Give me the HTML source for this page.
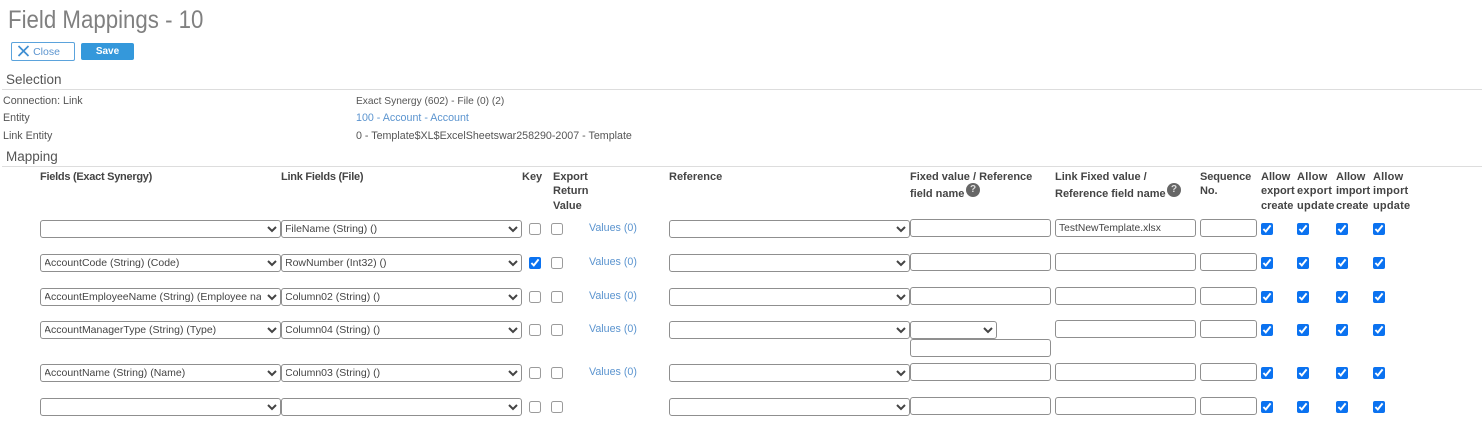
<!DOCTYPE html>
<html lang="en">
<head>
<meta charset="utf-8">
<title>Field Mappings - 10</title>
<style>
html,body{margin:0;padding:0;background:#fff;}
body{position:relative;width:1482px;height:425px;overflow:hidden;font-family:"Liberation Sans",sans-serif;font-size:10.7px;color:#555;filter:blur(.3px);}
.a{position:absolute;white-space:nowrap;}
h1{position:absolute;left:8px;top:5px;margin:0;font-size:25px;line-height:30px;font-weight:normal;color:#808080;white-space:nowrap;transform-origin:0 0;transform:scaleX(.89);}
h2{position:absolute;left:6px;margin:0;font-size:13.5px;line-height:16px;font-weight:normal;color:#555;}
.hr{position:absolute;left:2px;width:1480px;height:1px;background:#ddd;}
.btn{position:absolute;box-sizing:border-box;border-radius:2px;text-align:center;}
.th{position:absolute;font-weight:bold;font-size:11px;line-height:14.5px;color:#444;white-space:nowrap;}
a{color:#5b94cf;text-decoration:none;position:absolute;font-size:10.7px;line-height:14px;white-space:nowrap;}
select,input[type=text]{position:absolute;box-sizing:border-box;margin:0;font-family:"Liberation Sans",sans-serif;font-size:10.5px;color:#444;background:#fff;border:1px solid #8f8f8f;border-radius:3px;height:18px;}
select{padding:0;text-indent:-1px;}
input[type=text]{padding:0 3px;height:18px;font-size:10.3px;}
input[type=checkbox]{position:absolute;margin:0;width:12px;height:12px;accent-color:#0b72f0;}
input[type=checkbox]:not(:checked){opacity:.72;}
.c{left:40px;width:241px;padding-right:3px}.l{left:281px;width:241px}.r{left:669px;width:241px}
.f{left:910px;width:141px}.g{left:1055px;width:141px}.s{left:1200px;width:57px}
.k1{left:529px}.k2{left:551px}.p{left:1261px}.q{left:1297px}.m{left:1336px}.n{left:1373px}
.v{left:589px}
.help{position:absolute;top:183px;width:14px;height:14px;border-radius:50%;background:#666;color:#ddd;font-size:10px;font-weight:bold;line-height:14px;text-align:center;}
</style>
</head>
<body>
<h1>Field Mappings - 10</h1>
<div class="btn" style="left:11px;top:42px;width:64px;height:19px;border:1px solid #5ba3dc;color:#5b94cf;font-size:10.5px;line-height:19px;padding-left:7px;background:#fff;">Close</div>
<svg class="a" style="left:17px;top:45px" width="13" height="12" viewBox="0 0 13 12"><path d="M1.5 1 L11.5 11 M11.5 1 L1.5 11" stroke="#3f8fd2" stroke-width="1.7" fill="none"/></svg>
<div class="btn" style="left:81px;top:43px;width:53px;height:17px;background:#3498db;color:#fff;font-weight:bold;font-size:10px;line-height:18px;">Save</div>

<h2 style="top:72px">Selection</h2>
<div class="hr" style="top:89px"></div>
<div class="a" style="left:3px;top:94px;line-height:14px">Connection: Link</div>
<div class="a" style="left:356px;top:95px;line-height:14px;font-size:10.2px">Exact Synergy (602) - File (0) (2)</div>
<div class="a" style="left:3px;top:111px;line-height:14px">Entity</div>
<a style="left:356px;top:111px">100 - Account - Account</a>
<div class="a" style="left:3px;top:129px;line-height:14px">Link Entity</div>
<div class="a" style="left:356px;top:129px;line-height:14px">0 - Template$XL$ExcelSheetswar258290-2007 - Template</div>
<h2 style="top:149px">Mapping</h2>
<div class="hr" style="top:166px"></div>

<div class="th" style="left:40px;top:169.5px;letter-spacing:-.27px">Fields (Exact Synergy)</div>
<div class="th" style="left:281px;top:169.5px;letter-spacing:-.25px">Link Fields (File)</div>
<div class="th" style="left:522px;top:169.5px">Key</div>
<div class="th" style="left:553px;top:169.5px">Export<br>Return<br>Value</div>
<div class="th" style="left:669px;top:169.5px">Reference</div>
<div class="th" style="left:910px;top:169px;line-height:17px">Fixed value / Reference<br>field name</div>
<div class="help" style="left:966px">?</div>
<div class="th" style="left:1055px;top:169px;line-height:17px">Link Fixed value /<br>Reference field name</div>
<div class="help" style="left:1167px">?</div>
<div class="th" style="left:1200px;top:169.5px;letter-spacing:-.1px">Sequence<br>No.</div>
<div class="th" style="left:1261px;top:169.5px">Allow<br>export<br>create</div>
<div class="th" style="left:1297px;top:169.5px;letter-spacing:.25px">Allow<br>export<br>update</div>
<div class="th" style="left:1336px;top:169.5px">Allow<br>import<br>create</div>
<div class="th" style="left:1373px;top:169.5px;letter-spacing:.2px">Allow<br>import<br>update</div>

<!-- Row 1 -->
<select class="c" style="top:220px"><option></option></select>
<select class="l" style="top:220px"><option>FileName (String) ()</option></select>
<input type="checkbox" class="k1" style="top:223px"><input type="checkbox" class="k2" style="top:223px">
<a class="v" style="top:221px">Values (0)</a>
<select class="r" style="top:220px"><option></option></select>
<input type="text" class="f" style="top:219px">
<input type="text" class="g" style="top:219px" value="TestNewTemplate.xlsx">
<input type="text" class="s" style="top:219px">
<input type="checkbox" class="p" style="top:223px" checked><input type="checkbox" class="q" style="top:223px" checked><input type="checkbox" class="m" style="top:223px" checked><input type="checkbox" class="n" style="top:223px" checked>

<!-- Row 2 -->
<select class="c" style="top:254px"><option>AccountCode (String) (Code)</option></select>
<select class="l" style="top:254px"><option>RowNumber (Int32) ()</option></select>
<input type="checkbox" class="k1" style="top:257px" checked><input type="checkbox" class="k2" style="top:257px">
<a class="v" style="top:255px">Values (0)</a>
<select class="r" style="top:254px"><option></option></select>
<input type="text" class="f" style="top:253px">
<input type="text" class="g" style="top:253px">
<input type="text" class="s" style="top:253px">
<input type="checkbox" class="p" style="top:257px" checked><input type="checkbox" class="q" style="top:257px" checked><input type="checkbox" class="m" style="top:257px" checked><input type="checkbox" class="n" style="top:257px" checked>

<!-- Row 3 -->
<select class="c" style="top:288px"><option>AccountEmployeeName (String) (Employee name)</option></select>
<select class="l" style="top:288px"><option>Column02 (String) ()</option></select>
<input type="checkbox" class="k1" style="top:291px"><input type="checkbox" class="k2" style="top:291px">
<a class="v" style="top:289px">Values (0)</a>
<select class="r" style="top:288px"><option></option></select>
<input type="text" class="f" style="top:287px">
<input type="text" class="g" style="top:287px">
<input type="text" class="s" style="top:287px">
<input type="checkbox" class="p" style="top:291px" checked><input type="checkbox" class="q" style="top:291px" checked><input type="checkbox" class="m" style="top:291px" checked><input type="checkbox" class="n" style="top:291px" checked>

<!-- Row 4 -->
<select class="c" style="top:321px"><option>AccountManagerType (String) (Type)</option></select>
<select class="l" style="top:321px"><option>Column04 (String) ()</option></select>
<input type="checkbox" class="k1" style="top:324px"><input type="checkbox" class="k2" style="top:324px">
<a class="v" style="top:322px">Values (0)</a>
<select class="r" style="top:321px"><option></option></select>
<select style="left:910px;width:87px;top:321px"><option></option></select>
<input type="text" class="f" style="top:339px">
<input type="text" class="g" style="top:320px">
<input type="text" class="s" style="top:320px">
<input type="checkbox" class="p" style="top:324px" checked><input type="checkbox" class="q" style="top:324px" checked><input type="checkbox" class="m" style="top:324px" checked><input type="checkbox" class="n" style="top:324px" checked>

<!-- Row 5 -->
<select class="c" style="top:364px"><option>AccountName (String) (Name)</option></select>
<select class="l" style="top:364px"><option>Column03 (String) ()</option></select>
<input type="checkbox" class="k1" style="top:367px"><input type="checkbox" class="k2" style="top:367px">
<a class="v" style="top:365px">Values (0)</a>
<select class="r" style="top:364px"><option></option></select>
<input type="text" class="f" style="top:363px">
<input type="text" class="g" style="top:363px">
<input type="text" class="s" style="top:363px">
<input type="checkbox" class="p" style="top:367px" checked><input type="checkbox" class="q" style="top:367px" checked><input type="checkbox" class="m" style="top:367px" checked><input type="checkbox" class="n" style="top:367px" checked>

<!-- Row 6 -->
<select class="c" style="top:398px"><option></option></select>
<select class="l" style="top:398px"><option></option></select>
<input type="checkbox" class="k1" style="top:401px"><input type="checkbox" class="k2" style="top:401px">
<select class="r" style="top:398px"><option></option></select>
<input type="text" class="f" style="top:397px">
<input type="text" class="g" style="top:397px">
<input type="text" class="s" style="top:397px">
<input type="checkbox" class="p" style="top:401px" checked><input type="checkbox" class="q" style="top:401px" checked><input type="checkbox" class="m" style="top:401px" checked><input type="checkbox" class="n" style="top:401px" checked>
</body>
</html>
